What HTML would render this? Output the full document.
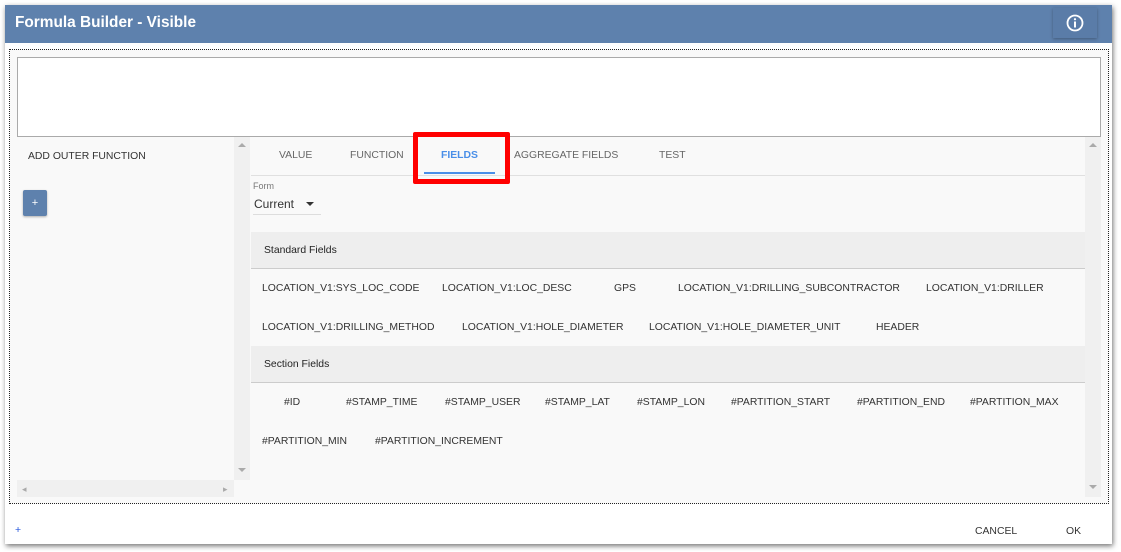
<!DOCTYPE html>
<html><head><style>
body{margin:0;width:1121px;height:552px;background:#fff;font-family:"Liberation Sans",Arial,sans-serif;position:relative;overflow:hidden}
.a{position:absolute}
.t{position:absolute;font-size:10.4px;color:#333;white-space:nowrap;line-height:12px}
</style></head><body>
<div class="a" style="left:5px;top:5px;width:1107px;height:539px;background:#fff;box-shadow:1px 2px 5px rgba(0,0,0,.55)"></div>
<div class="a" style="left:5px;top:5px;width:1107px;height:38px;background:#5e81ad"></div>
<div class="a" style="left:15px;top:14px;color:#fff;font-weight:bold;font-size:15.4px">Formula Builder - Visible</div>
<div class="a" style="left:1053px;top:8px;width:44px;height:30px;background:#5a7ca8;box-shadow:0 1px 3px rgba(0,0,0,.3)"></div>
<svg class="a" style="left:1066px;top:14px" width="18" height="18" viewBox="0 0 18 18"><circle cx="9" cy="9" r="7.5" fill="none" stroke="#fff" stroke-width="1.8"/><rect x="8" y="7.5" width="2" height="6" fill="#fff"/><circle cx="9" cy="5.2" r="1.1" fill="#fff"/></svg>
<div class="a" style="left:9px;top:49px;width:1098px;height:453px;border:1px dotted #222;background:#f9f9f9"></div>
<div class="a" style="left:17px;top:57px;width:1082px;height:78px;border:1px solid #aaa;background:#fff"></div>
<div class="t" style="left:28px;top:151px">ADD OUTER FUNCTION</div>
<div class="a" style="left:23px;top:190px;width:24px;height:26px;background:#5e81ad;border-radius:2px;box-shadow:0 1px 2px rgba(0,0,0,.3);color:#fff;font-size:11px;text-align:center;line-height:26px">+</div>
<div class="a" style="left:234px;top:137px;width:16px;height:343px;background:#f0f0f0"></div>
<div class="a" style="left:238px;top:143px;width:0;height:0;border:4px solid transparent;border-bottom-color:#aaa;border-top:0"></div>
<div class="a" style="left:238px;top:468px;width:0;height:0;border:4px solid transparent;border-top-color:#aaa;border-bottom:0"></div>
<div class="a" style="left:17px;top:480px;width:217px;height:17px;background:#f0f0f0"></div>
<div class="t" style="left:22px;top:483px;color:#aaa;font-size:9px">◂</div>
<div class="t" style="left:223px;top:483px;color:#aaa;font-size:9px">▸</div>
<div class="a" style="left:1085px;top:137px;width:16px;height:360px;background:#f0f0f0"></div>
<div class="a" style="left:1089px;top:143px;width:0;height:0;border:4px solid transparent;border-bottom-color:#aaa;border-top:0"></div>
<div class="a" style="left:1089px;top:485px;width:0;height:0;border:4px solid transparent;border-top-color:#aaa;border-bottom:0"></div>
<div class="a" style="left:251px;top:175px;width:834px;height:1px;background:#e0e0e0"></div>
<div class="t" style="left:279px;top:150px;color:#666">VALUE</div>
<div class="t" style="left:350px;top:150px;color:#666">FUNCTION</div>
<div class="t" style="left:441px;top:150px;color:#4a8fe8;font-weight:bold">FIELDS</div>
<div class="a" style="left:424px;top:172px;width:71px;height:2px;background:#4a8fe8"></div>
<div class="t" style="left:514px;top:150px;color:#666">AGGREGATE FIELDS</div>
<div class="t" style="left:659px;top:150px;color:#666">TEST</div>
<div class="a" style="left:413px;top:132px;width:87px;height:42px;border:5px solid #f00;border-radius:2px"></div>
<div class="t" style="left:253px;top:180px;font-size:9px;color:#777">Form</div>
<div class="t" style="left:254px;top:198px;font-size:12px;color:#333">Current</div>
<div class="a" style="left:306px;top:202px;border:4px solid transparent;border-top:4px solid #333;border-bottom:0"></div>
<div class="a" style="left:253px;top:214px;width:68px;height:1px;background:#ddd"></div>
<div class="a" style="left:251px;top:232px;width:834px;height:36px;background:#eee;border-bottom:1px solid #ccc"></div>
<div class="t" style="left:264px;top:245px;color:#222">Standard Fields</div>
<div class="a" style="left:251px;top:346px;width:834px;height:36px;background:#eee;border-bottom:1px solid #ccc"></div>
<div class="t" style="left:264px;top:359px;color:#222">Section Fields</div>
<div class="t" style="left:262px;top:283px">LOCATION_V1:SYS_LOC_CODE</div>
<div class="t" style="left:442px;top:283px">LOCATION_V1:LOC_DESC</div>
<div class="t" style="left:614px;top:283px">GPS</div>
<div class="t" style="left:678px;top:283px">LOCATION_V1:DRILLING_SUBCONTRACTOR</div>
<div class="t" style="left:926px;top:283px">LOCATION_V1:DRILLER</div>
<div class="t" style="left:262px;top:322px">LOCATION_V1:DRILLING_METHOD</div>
<div class="t" style="left:462px;top:322px">LOCATION_V1:HOLE_DIAMETER</div>
<div class="t" style="left:649px;top:322px">LOCATION_V1:HOLE_DIAMETER_UNIT</div>
<div class="t" style="left:876px;top:322px">HEADER</div>
<div class="t" style="left:284px;top:397px">#ID</div>
<div class="t" style="left:346px;top:397px">#STAMP_TIME</div>
<div class="t" style="left:445px;top:397px">#STAMP_USER</div>
<div class="t" style="left:545px;top:397px">#STAMP_LAT</div>
<div class="t" style="left:637px;top:397px">#STAMP_LON</div>
<div class="t" style="left:731px;top:397px">#PARTITION_START</div>
<div class="t" style="left:857px;top:397px">#PARTITION_END</div>
<div class="t" style="left:970px;top:397px">#PARTITION_MAX</div>
<div class="t" style="left:262px;top:436px">#PARTITION_MIN</div>
<div class="t" style="left:375px;top:436px">#PARTITION_INCREMENT</div>
<div class="t" style="left:15px;top:525px;color:#2255dd">+</div>
<div class="t" style="left:975px;top:526px">CANCEL</div>
<div class="t" style="left:1066px;top:526px">OK</div>
</body></html>
